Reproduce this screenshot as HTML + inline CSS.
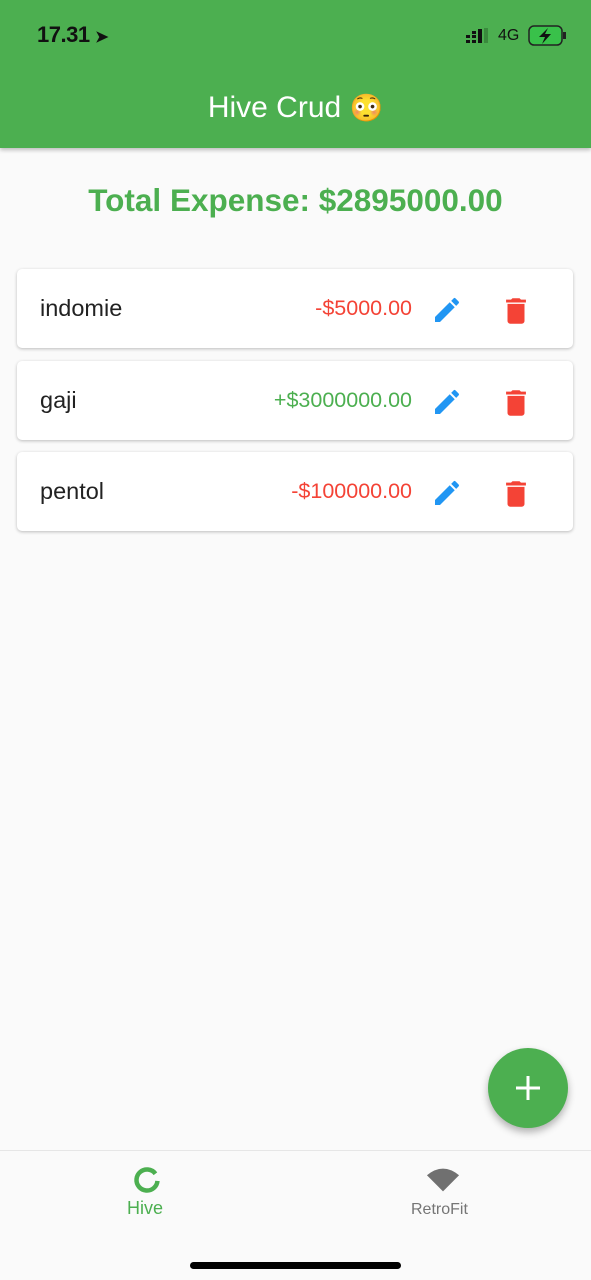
<!DOCTYPE html>
<html><head><meta charset="utf-8"><style>
*{margin:0;padding:0;box-sizing:border-box}
body{width:591px;height:1280px;background:#fafafa;font-family:"Liberation Sans",sans-serif;position:relative;overflow:hidden}
.top{position:absolute;left:0;top:0;width:591px;height:148px;background:#4caf50;box-shadow:0 2px 4px rgba(0,0,0,.25)}
.time{position:absolute;left:37px;top:22px;font-size:22px;font-weight:bold;color:#111;letter-spacing:-0.5px}
.title{position:absolute;left:0;width:591px;top:91px;text-align:center;color:#fff;font-size:30px}
.total{position:absolute;top:182px;width:591px;text-align:center;color:#4caf50;font-size:31.5px;font-weight:bold}
.card{position:absolute;left:17px;width:556px;height:79px;background:#fff;border-radius:5px;box-shadow:0 1px 3px rgba(0,0,0,.25)}
.name{position:absolute;left:23px;top:26px;font-size:23.5px;color:#222}
.amt{position:absolute;right:161px;top:27px;font-size:21.5px}
.ic{position:absolute;top:25px}
.fab{position:absolute;left:488px;top:1048px;width:80px;height:80px;border-radius:50%;background:#4caf50;box-shadow:0 4px 8px rgba(0,0,0,.3)}
.nav{position:absolute;top:1150px;left:0;width:591px;height:130px;border-top:1px solid #e6e6e6;background:#fafafa}
</style></head><body>
<div class="top">
<div class="time">17.31 <span style="font-size:16px">➤</span></div>
<div style="position:absolute;left:466px;top:28px;width:24px;height:16px">
<svg width="24" height="16"><g fill="#111"><rect x="0" y="7" width="4" height="3"/><rect x="0" y="12" width="4" height="3"/><rect x="6" y="3" width="4" height="3"/><rect x="6" y="7" width="4" height="3"/><rect x="6" y="12" width="4" height="3"/><rect x="12" y="1" width="4" height="14"/></g><rect x="18" y="0" width="4" height="15" fill="#3a8a3d"/></svg></div>
<div style="position:absolute;left:498px;top:27px;font-size:16px;color:#111">4G</div>
<svg style="position:absolute;left:528px;top:25px" width="40" height="22"><rect x="1" y="1" width="33" height="19" rx="5" fill="#39c14a" stroke="#222" stroke-width="1.5"/><rect x="35" y="7" width="3" height="7" fill="#222"/><path d="M20 3 L11 12 L17 12 L14 19 L23 9 L17 9 Z" fill="#111"/></svg>
<div class="title">Hive Crud <span style="font-size:27px">😳</span></div>
</div>
<div class="total">Total Expense: $2895000.00</div>

<div class="card" style="top:269px"><div class="name">indomie</div><div class="amt" style="color:#f44336">-$5000.00</div>
<svg class="ic" style="left:414px" width="32" height="32" viewBox="0 0 24 24"><path fill="#2196f3" d="M3 17.25V21h3.75L17.81 9.94l-3.75-3.75L3 17.25zM20.71 7.04a1 1 0 0 0 0-1.41l-2.34-2.34a1 1 0 0 0-1.41 0l-1.83 1.83 3.75 3.75 1.83-1.83z"/></svg>
<svg class="ic" style="left:482px" width="34" height="34" viewBox="0 0 24 24"><path fill="#f44336" d="M6 19c0 1.1.9 2 2 2h8c1.1 0 2-.9 2-2V7H6v12zM19 4h-3.5l-1-1h-5l-1 1H5v2h14V4z"/></svg></div>

<div class="card" style="top:361px"><div class="name">gaji</div><div class="amt" style="color:#4caf50">+$3000000.00</div>
<svg class="ic" style="left:414px" width="32" height="32" viewBox="0 0 24 24"><path fill="#2196f3" d="M3 17.25V21h3.75L17.81 9.94l-3.75-3.75L3 17.25zM20.71 7.04a1 1 0 0 0 0-1.41l-2.34-2.34a1 1 0 0 0-1.41 0l-1.83 1.83 3.75 3.75 1.83-1.83z"/></svg>
<svg class="ic" style="left:482px" width="34" height="34" viewBox="0 0 24 24"><path fill="#f44336" d="M6 19c0 1.1.9 2 2 2h8c1.1 0 2-.9 2-2V7H6v12zM19 4h-3.5l-1-1h-5l-1 1H5v2h14V4z"/></svg></div>

<div class="card" style="top:452px"><div class="name">pentol</div><div class="amt" style="color:#f44336">-$100000.00</div>
<svg class="ic" style="left:414px" width="32" height="32" viewBox="0 0 24 24"><path fill="#2196f3" d="M3 17.25V21h3.75L17.81 9.94l-3.75-3.75L3 17.25zM20.71 7.04a1 1 0 0 0 0-1.41l-2.34-2.34a1 1 0 0 0-1.41 0l-1.83 1.83 3.75 3.75 1.83-1.83z"/></svg>
<svg class="ic" style="left:482px" width="34" height="34" viewBox="0 0 24 24"><path fill="#f44336" d="M6 19c0 1.1.9 2 2 2h8c1.1 0 2-.9 2-2V7H6v12zM19 4h-3.5l-1-1h-5l-1 1H5v2h14V4z"/></svg></div>

<div class="fab"><svg style="position:absolute;left:26px;top:26px" width="28" height="28"><path d="M14 2V26M2 14H26" stroke="#fff" stroke-width="3"/></svg></div>

<div class="nav">
<svg style="position:absolute;left:132px;top:14px" width="30" height="30" viewBox="0 0 30 30"><circle cx="15" cy="15" r="10.5" fill="none" stroke="#4caf50" stroke-width="4.5" stroke-dasharray="58 8" transform="rotate(5 15 15)"/></svg>
<div style="position:absolute;left:127px;top:47px;font-size:18px;color:#4caf50">Hive</div>
<svg style="position:absolute;left:426px;top:16px" width="34" height="26" viewBox="0 0 36 26"><path d="M1 8 Q18 -6 35 8 L18 25 Z" fill="#707070"/></svg>
<div style="position:absolute;left:411px;top:50px;font-size:16px;color:#757575">RetroFit</div>
<div style="position:absolute;left:190px;top:111px;width:211px;height:7px;border-radius:4px;background:#000"></div>
</div>
</body></html>
